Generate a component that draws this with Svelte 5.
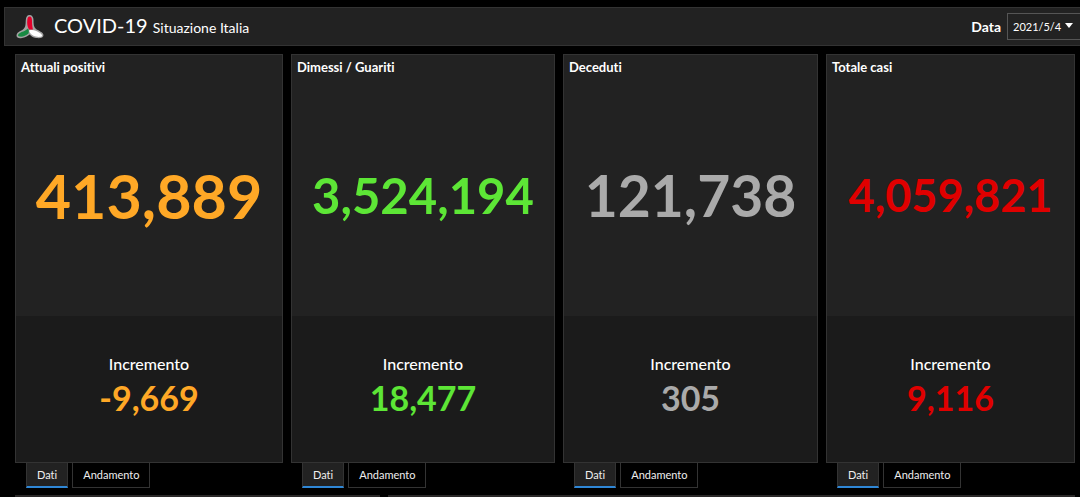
<script lang="ts">
  type Indicator = {
    title: string;
    total: string;
    increment: string;
    tone: string;
    size: string;
  };

  const indicators: Indicator[] = [
    { title: 'Attuali positivi', total: '413,889', increment: '-9,669', tone: 'orange', size: 'xl' },
    { title: 'Dimessi / Guariti', total: '3,524,194', increment: '18,477', tone: 'green', size: 'md' },
    { title: 'Deceduti', total: '121,738', increment: '305', tone: 'grey', size: 'lg' },
    { title: 'Totale casi', total: '4,059,821', increment: '9,116', tone: 'red', size: 'sm' }
  ];

  const tabs = ['Dati', 'Andamento'];

  let selectedDate = '2021/5/4';
  let activeTabs = indicators.map(() => 0);
</script>

<div class="dashboard">
  <header class="topbar">
    <svg class="logo" viewBox="0 0 28 26" aria-hidden="true">
      <path
        d="M13.500 1C16 1 17.500 3 17.500 6C17.500 10 17.500 13 20 15C23 17 27 18 27.500 21C27.500 24 24 24.500 20 24C17 23.500 15 22 13.500 20.500C11.500 22.500 9 23.500 6 24C3 24.500 0.500 24 0.500 21.500C1 18 4 17.500 7 15.500C10 13 9.500 10 9.800 6C10 3 11 1 13.500 1Z"
        fill="#a3a3a3"
      />
      <path d="M13.500 2.500C15.500 2.500 16 4.500 16 7C16 11 16.500 13.500 17 15.500L13 15.500C11 12 11 9 11.300 6C11.500 4 12 2.500 13.500 2.500Z" fill="#e4002b" />
      <path d="M12 14.500C13 16 13 18 12.500 19.500C10 22 6 23 3.500 22.500C1.500 22 1.500 20.500 3.500 19.200C6.500 17.500 9.500 17 12 14.500Z" fill="#188a43" />
      <path d="M13 16.500C17 15.500 20 16.500 23 18.500C25 19.500 26.500 21 26 22C25 23.500 20 23 17.500 21.800C15 20.500 13.500 18.500 13 16.500Z" fill="#fff" />
    </svg>
    <h1>COVID-19 <small>Situazione Italia</small></h1>
    <label for="date">Data</label>
    <div class="select-wrap">
      <select id="date" bind:value={selectedDate}>
        <option>2021/5/4</option>
      </select>
      <svg class="caret" viewBox="0 0 8 5" aria-hidden="true"><path d="M0 0h8L4 5z" /></svg>
    </div>
  </header>

  <main class="cards">
    {#each indicators as item, i}
      <section class="column {item.size}">
        <div class="card {item.tone}">
          <div class="card-main">
            <h2>{item.title}</h2>
            <p class="total">{item.total}</p>
          </div>
          <div class="card-increment">
            <h3>Incremento</h3>
            <p class="increment">{item.increment}</p>
          </div>
        </div>
        <div class="tabs">
          {#each tabs as tab, t}
            <button class:active={activeTabs[i] === t} on:click={() => (activeTabs[i] = t)}>{tab}</button>
          {/each}
        </div>
      </section>
    {/each}
  </main>

  <div class="next-row">
    <div class="panel narrow"></div>
    <div class="panel"></div>
  </div>
</div>

<style>
  :global(body) {
    background: #000;
  }

  .dashboard {
    display: flex;
    flex-direction: column;
    box-sizing: border-box;
    height: 100vh;
    overflow: hidden;
    padding-top: 7px;
    color: #fff;
    font-family: Lato, 'Open Sans', sans-serif;
    font-variant-ligatures: none;
  }

  h1,
  h2,
  h3,
  p {
    margin: 0;
  }

  .topbar {
    display: flex;
    align-items: center;
    flex: none;
    box-sizing: border-box;
    height: 39px;
    margin-left: 4px;
    padding-left: 11px;
    border: 1px solid #333;
    border-right: 0;
    background: #222;
  }

  .logo {
    width: 28px;
    height: 26px;
    margin-right: 10px;
  }

  h1 {
    flex: 1;
    font-size: 20px;
    font-weight: 400;
    line-height: 36px;
  }

  h1 small {
    font-size: 14px;
  }

  .topbar label {
    margin-right: 6px;
    font-size: 14px;
    font-weight: 700;
  }

  .select-wrap {
    position: relative;
  }

  select {
    display: block;
    width: 73px;
    height: 27px;
    padding: 0 5px;
    border: 1px solid #555;
    border-right: 0;
    border-radius: 0;
    appearance: none;
    background: #222;
    color: #fff;
    font-family: inherit;
    font-size: 11px;
  }

  .caret {
    position: absolute;
    top: 10px;
    right: 7px;
    width: 8px;
    height: 5px;
    fill: #fff;
    pointer-events: none;
  }

  .cards {
    display: flex;
    flex: 1;
    gap: 8px;
    padding: 8px 5px 7px 15px;
  }

  .column {
    display: flex;
    flex-direction: column;
    flex: 255 1 0;
    min-width: 0;
  }

  .column.xl {
    flex-grow: 268;
  }

  .column.md {
    flex-grow: 264;
  }

  .column.sm {
    flex-grow: 249;
  }

  .card {
    display: flex;
    flex-direction: column;
    flex: 1;
    border: 1px solid #333;
    background: #1b1b1b;
  }

  .card-main {
    display: flex;
    flex-direction: column;
    flex: 262;
    background: #222;
  }

  h2 {
    padding: 4px 5px 0;
    font-size: 13px;
    font-weight: 700;
    line-height: 16px;
  }

  .total {
    display: flex;
    align-items: center;
    justify-content: center;
    flex: 1;
    font-size: 57px;
    font-weight: 700;
    line-height: 1;
  }

  .xl .total {
    font-size: 61px;
  }

  .md .total {
    font-size: 49px;
  }

  .sm .total {
    font-size: 45px;
  }

  .card-increment {
    display: flex;
    flex-direction: column;
    align-items: center;
    justify-content: center;
    flex: 145;
    padding-bottom: 2px;
  }

  h3 {
    font-size: 16px;
    font-weight: 500;
    line-height: 20px;
  }

  .increment {
    font-size: 34px;
    font-weight: 700;
    line-height: 48px;
  }

  .orange p {
    color: #ffa826;
  }

  .green p {
    color: #5de636;
  }

  .grey p {
    color: #aaa;
  }

  .red p {
    color: #e00000;
  }

  .tabs {
    display: flex;
    gap: 4px;
    padding-left: 11px;
  }

  button {
    height: 25px;
    padding: 0 10px 1px;
    border: 1px solid #333;
    border-top: 0;
    background: #000;
    color: #eee;
    font-family: inherit;
    font-size: 11px;
    font-variant-ligatures: none;
    cursor: pointer;
  }

  button.active {
    padding-bottom: 0;
    border-bottom: 2px solid #2f87d6;
    background: #222;
  }

  .next-row {
    display: flex;
    flex: none;
    gap: 8px;
    height: 2px;
    padding: 0 5px 0 15px;
  }

  .panel {
    flex: 686;
    background: #2a2828;
  }

  .panel.narrow {
    flex: 365;
  }
</style>
